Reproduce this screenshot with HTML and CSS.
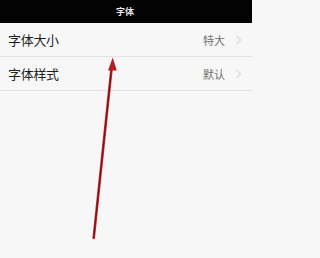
FILE: index.html
```html
<!DOCTYPE html>
<html lang="zh">
<head>
<meta charset="utf-8">
<link rel="stylesheet" href="styles.css">
</head>
<body>
<div class="screen">
  <header class="topbar"><span class="title">字体</span></header>
  <ul class="list">
    <li class="row"><span class="label">字体大小</span><span class="value">特大</span><span class="chev"><svg width="7" height="10" viewBox="0 0 7 10"><path d="M1.5 1 L5.5 5 L1.5 9" fill="none" stroke="#dcdcdc" stroke-width="1.3"/></svg></span></li>
    <li class="row"><span class="label">字体样式</span><span class="value">默认</span><span class="chev"><svg width="7" height="10" viewBox="0 0 7 10"><path d="M1.5 1 L5.5 5 L1.5 9" fill="none" stroke="#dcdcdc" stroke-width="1.3"/></svg></span></li>
  </ul>
  <svg class="arrow" width="252" height="258" viewBox="0 0 252 258">
    <line x1="93.7" y1="238" x2="111.8" y2="66" stroke="#c0282a" stroke-width="2.6" stroke-linecap="round"/>
    <line x1="93.7" y1="238" x2="111.8" y2="66" stroke="#7a1418" stroke-width="1.2"/>
    <polygon points="112.7,57.5 108,70.5 116.8,70.5" fill="#b51f24"/>
  </svg>
</div>
</body>
</html>
```
FILE: styles.css
```css
html, body {
  margin: 0;
  padding: 0;
  background: #f7f7f7;
}
.screen {
  position: relative;
  width: 252px;
  height: 258px;
  overflow: hidden;
  font-family: "Noto Sans CJK SC", "Noto Sans", sans-serif;
}
.topbar {
  height: 23px;
  background: #030303;
  display: flex;
  align-items: center;
  justify-content: center;
}
.title {
  color: #e8e8e8;
  font-size: 9px;
  font-weight: bold;
  margin-left: -2px;
}
.list {
  list-style: none;
  margin: 0;
  padding: 0;
}
.row {
  height: 33px;
  border-bottom: 1px solid #e2e2e2;
  display: flex;
  align-items: center;
  padding: 0 10px 0 8px;
}
.label {
  flex: 1;
  font-size: 13px;
  color: #1e1e1e;
  letter-spacing: -0.3px;
}
.value {
  font-size: 11px;
  color: #6f6f6f;
  margin-right: 10px;
}
.chev {
  display: flex;
  align-items: center;
}
.arrow {
  position: absolute;
  left: 0;
  top: 0;
}
```
